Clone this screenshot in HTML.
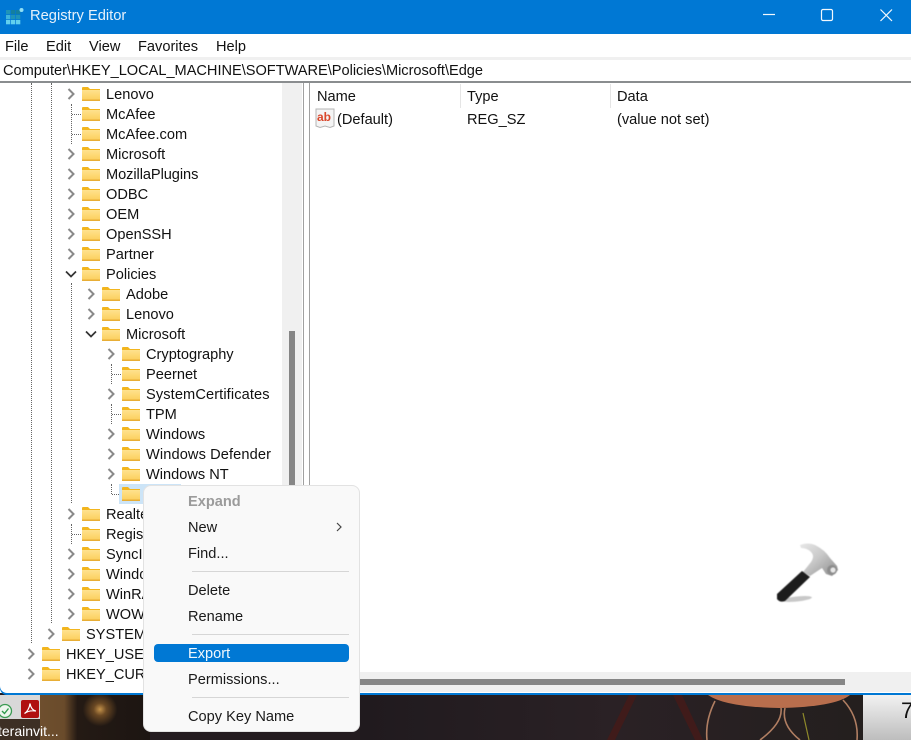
<!DOCTYPE html>
<html><head><meta charset="utf-8"><title>Registry Editor</title>
<style>
html,body{margin:0;padding:0;background:#fff}
#p{position:relative;width:911px;height:740px;overflow:hidden;font-family:"Liberation Sans",sans-serif;font-size:14.6px;color:#111;background:#fff}
.t{position:absolute;line-height:20px;white-space:nowrap;margin-top:1px}
.b{position:absolute}
.f{position:absolute;width:18px;height:14px}
.c{position:absolute;width:10px;height:14px}
.v{position:absolute;width:0;border-left:1px dotted #666}
.h{position:absolute;height:0;border-top:1px dotted #666;width:9px}
.m{position:absolute;left:44px;line-height:20px;white-space:nowrap;color:#1a1a1a;margin-top:1px}
.s{position:absolute;left:48px;width:157px;height:1px;background:#d6d6d6}
</style></head><body><div id="p">
<svg width="0" height="0" style="position:absolute"><defs>
<linearGradient id="fg" x1="0" y1="0" x2="0" y2="1"><stop offset="0" stop-color="#ffe28e"/><stop offset="1" stop-color="#fcd060"/></linearGradient>
<linearGradient id="ma" x1="0" y1="0" x2="1" y2="1"><stop offset="0" stop-color="#e8e8e8"/><stop offset=".45" stop-color="#c9c9c9"/><stop offset="1" stop-color="#8a8a8a"/></linearGradient>
<symbol id="fo" viewBox="0 0 18 14"><path d="M0 1 Q0 0 1 0H6L8 2H18V14H0Z" fill="#f2b51e"/><path d="M0 3H18V12.500H0Z" fill="url(#fg)"/><path d="M0 12.500H18V14H0Z" fill="#e8ae36"/></symbol>
<symbol id="cr" viewBox="0 0 10 14"><path d="M2.500 2 L7.500 7 L2.500 12" fill="none" stroke="#8a8a8a" stroke-width="2"/></symbol>
<symbol id="dn" viewBox="0 0 14 10"><path d="M2 2.500 L7 7.500 L12 2.500" fill="none" stroke="#333" stroke-width="1.700"/></symbol>
</defs></svg>

<!-- desktop strip -->
<div class="b" style="left:0;top:693px;width:911px;height:47px;background:#241c20"></div>
<div class="b" style="left:0;top:695px;width:40px;height:45px;background:#3d2f24"></div>
<div class="b" style="left:40px;top:695px;width:110px;height:45px;background:linear-gradient(90deg,#6e4f2e 0,#6a4b2b 22%,#241a14 34%,#1c1512 100%)"></div>
<div class="b" style="left:82px;top:695px;width:36px;height:32px;background:radial-gradient(ellipse at 50% 45%,#c4924a 0,#6a4823 25%,rgba(30,22,18,0) 68%)"></div>
<div class="b" style="left:0;top:695px;width:40px;height:24px;background:#d8d8d8"></div>
<svg class="b" style="left:0;top:703px" width="14" height="16" viewBox="0 0 14 16"><circle cx="5" cy="8" r="6.500" fill="#eef5ee" stroke="#3a9a52" stroke-width="1.300"/><path d="M2 8 L4.500 10.500 L8.500 5.500" fill="none" stroke="#2f9a4c" stroke-width="1.400"/></svg>
<svg class="b" style="left:21px;top:700px" width="18" height="18" viewBox="0 0 18 18"><rect width="18" height="18" rx="2" fill="#b01010"/><path d="M3.500 13.500C6 12 8.500 8 9 3.500 9.500 7 11.500 10.500 15 11 11 10.500 6.500 11 3.500 13.500Z" fill="none" stroke="#fff" stroke-width="1.200"/></svg>
<div class="t" style="left:-2px;top:720px;color:#fff;font-size:14px">terainvit...</div>
<div class="b" style="left:360px;top:695px;width:503px;height:45px;background:linear-gradient(90deg,#201a1e,#2a2125 50%,#241f1e)"></div>
<svg class="b" style="left:595px;top:695px" width="268" height="45" viewBox="0 0 268 45">
<path d="M12 45L34 0H42L20 45ZM78 0H87L108 45H100Z" fill="#401b1a"/>
<path d="M113 0H255Q240 12 184 13 130 12 113 0Z" fill="#b86e4d"/>
<path d="M120 6Q110 26 112 45M186 13Q188 28 165 45M190 13Q186 30 205 45M248 5Q264 22 262 45" fill="none" stroke="#b07e62" stroke-width="1.600"/>
<path d="M208 18L214 45" stroke="#8f8a2a" stroke-width="1.200" fill="none"/>
</svg>
<div class="b" style="left:863px;top:695px;width:48px;height:45px;background:linear-gradient(180deg,#f2f2f2,#bdbdbd)"></div>
<div class="t" style="left:901px;top:698px;font-size:22px;line-height:24px;color:#111">7</div>

<!-- window -->
<div class="b" style="left:0;top:0;width:911px;height:695px;background:#0078d4;border-radius:0 0 0 7px"></div>
<div class="b" style="left:0;top:0;width:911px;height:693px;background:#fff;border-radius:0 0 0 7px"></div>
<div class="b" style="left:0;top:0;width:911px;height:34px;background:#0078d4"></div>
<svg class="b" style="left:6px;top:8px" width="18" height="17" viewBox="0 0 18 17"><rect x="0" y="2" width="4.300" height="4.300" fill="#1f93b8"/><rect x="5" y="2" width="4.300" height="4.300" fill="#147f9f"/><rect x="10" y="2" width="4.300" height="4.300" fill="#147f9f"/><rect x="0" y="7" width="4.300" height="4.300" fill="#3fb4dc"/><rect x="5" y="7" width="4.300" height="4.300" fill="#1f93b8"/><rect x="10" y="7" width="4.300" height="4.300" fill="#1f93b8"/><rect x="0" y="12" width="4.300" height="4.300" fill="#62d0ee"/><rect x="5" y="12" width="4.300" height="4.300" fill="#62d0ee"/><rect x="10" y="12" width="4.300" height="4.300" fill="#62d0ee"/><circle cx="15.500" cy="2" r="2" fill="#8fdff5"/></svg>
<div class="t" style="left:30px;top:5px;color:#e6f1fb;font-size:14.700px">Registry Editor</div>
<svg class="b" style="left:755px;top:0" width="156" height="34" viewBox="0 0 156 34" fill="none" stroke="#f2f8fd" stroke-width="1.200"><path d="M8 14.500H20"/><rect x="66.500" y="9.500" width="11" height="11" rx="1.500"/><path d="M125.500 9.500L137 21M137 9.500L125.500 21"/></svg>

<div class="t" style="left:5px;top:36px">File</div>
<div class="t" style="left:46px;top:36px">Edit</div>
<div class="t" style="left:89px;top:36px">View</div>
<div class="t" style="left:138px;top:36px">Favorites</div>
<div class="t" style="left:216px;top:36px">Help</div>
<div class="b" style="left:0;top:57px;width:911px;height:3px;background:#f0f0f0"></div>
<div class="t" style="left:3px;top:60px;letter-spacing:-.02px">Computer\HKEY_LOCAL_MACHINE\SOFTWARE\Policies\Microsoft\Edge</div>
<div class="b" style="left:0;top:81px;width:911px;height:2px;background:#8a8d8f"></div>

<!-- scroll + splitter -->
<div class="b" style="left:282px;top:83px;width:20px;height:420px;background:#f0f0f0"></div>
<div class="b" style="left:289px;top:331px;width:6px;height:170px;background:#868686"></div>
<div class="b" style="left:303px;top:83px;width:1px;height:420px;background:#a0a0a0"></div>
<div class="b" style="left:309px;top:83px;width:1px;height:589px;background:#a0a0a0"></div>
<div class="b" style="left:310px;top:672px;width:601px;height:20px;background:#f0f0f0"></div>
<div class="b" style="left:340px;top:679px;width:505px;height:6px;background:#868686"></div>

<!-- list -->
<div class="t" style="left:317px;top:86px">Name</div>
<div class="t" style="left:467px;top:86px">Type</div>
<div class="t" style="left:617px;top:86px">Data</div>
<div class="b" style="left:460px;top:84px;width:1px;height:24px;background:#e5e5e5"></div>
<div class="b" style="left:610px;top:84px;width:1px;height:24px;background:#e5e5e5"></div>
<svg class="b" style="left:315px;top:108px" width="20" height="21" viewBox="0 0 20 21"><path d="M1 1H19V18L15 19.500 10 18 5 19.500 1 18Z" fill="#f4f4f4" stroke="#b5b5b5"/><text x="2" y="13" font-family="Liberation Sans,sans-serif" font-size="12" font-weight="bold" fill="#d9472b">ab</text></svg>
<div class="t" style="left:337px;top:109px">(Default)</div>
<div class="t" style="left:467px;top:109px">REG_SZ</div>
<div class="t" style="left:617px;top:109px">(value not set)</div>

<!-- tree lines -->
<div class="v" style="left:31px;top:83px;height:560px"></div>
<div class="v" style="left:51px;top:83px;height:540px"></div>
<div class="v" style="left:71px;top:104px;height:40px"></div><div class="h" style="left:72px;top:114px"></div><div class="h" style="left:72px;top:134px"></div>
<div class="v" style="left:71px;top:283px;height:220px"></div>
<div class="v" style="left:71px;top:524px;height:20px"></div><div class="h" style="left:72px;top:534px"></div>
<div class="v" style="left:111px;top:364px;height:20px"></div><div class="h" style="left:112px;top:374px"></div>
<div class="v" style="left:111px;top:404px;height:20px"></div><div class="h" style="left:112px;top:414px"></div>
<div class="v" style="left:111px;top:484px;height:10px"></div><div class="h" style="left:112px;top:494px"></div>
<div class="b" style="left:119px;top:484px;width:62px;height:20px;background:#cce4f7"></div>

<!-- level A -->
<svg class="c" style="left:66px;top:87px"><use href="#cr"/></svg><svg class="f" style="left:82px;top:87px"><use href="#fo"/></svg><div class="t" style="left:106px;top:84px">Lenovo</div>
<svg class="f" style="left:82px;top:107px"><use href="#fo"/></svg><div class="t" style="left:106px;top:104px">McAfee</div>
<svg class="f" style="left:82px;top:127px"><use href="#fo"/></svg><div class="t" style="left:106px;top:124px">McAfee.com</div>
<svg class="c" style="left:66px;top:147px"><use href="#cr"/></svg><svg class="f" style="left:82px;top:147px"><use href="#fo"/></svg><div class="t" style="left:106px;top:144px">Microsoft</div>
<svg class="c" style="left:66px;top:167px"><use href="#cr"/></svg><svg class="f" style="left:82px;top:167px"><use href="#fo"/></svg><div class="t" style="left:106px;top:164px;letter-spacing:-.07px">MozillaPlugins</div>
<svg class="c" style="left:66px;top:187px"><use href="#cr"/></svg><svg class="f" style="left:82px;top:187px"><use href="#fo"/></svg><div class="t" style="left:106px;top:184px">ODBC</div>
<svg class="c" style="left:66px;top:207px"><use href="#cr"/></svg><svg class="f" style="left:82px;top:207px"><use href="#fo"/></svg><div class="t" style="left:106px;top:204px">OEM</div>
<svg class="c" style="left:66px;top:227px"><use href="#cr"/></svg><svg class="f" style="left:82px;top:227px"><use href="#fo"/></svg><div class="t" style="left:106px;top:224px">OpenSSH</div>
<svg class="c" style="left:66px;top:247px"><use href="#cr"/></svg><svg class="f" style="left:82px;top:247px"><use href="#fo"/></svg><div class="t" style="left:106px;top:244px">Partner</div>
<svg class="b" style="left:64px;top:269px" width="14" height="10"><use href="#dn"/></svg><svg class="f" style="left:82px;top:267px"><use href="#fo"/></svg><div class="t" style="left:106px;top:264px">Policies</div>
<!-- level B -->
<svg class="c" style="left:86px;top:287px"><use href="#cr"/></svg><svg class="f" style="left:102px;top:287px"><use href="#fo"/></svg><div class="t" style="left:126px;top:284px">Adobe</div>
<svg class="c" style="left:86px;top:307px"><use href="#cr"/></svg><svg class="f" style="left:102px;top:307px"><use href="#fo"/></svg><div class="t" style="left:126px;top:304px">Lenovo</div>
<svg class="b" style="left:84px;top:329px" width="14" height="10"><use href="#dn"/></svg><svg class="f" style="left:102px;top:327px"><use href="#fo"/></svg><div class="t" style="left:126px;top:324px">Microsoft</div>
<!-- level C -->
<svg class="c" style="left:106px;top:347px"><use href="#cr"/></svg><svg class="f" style="left:122px;top:347px"><use href="#fo"/></svg><div class="t" style="left:146px;top:344px">Cryptography</div>
<svg class="f" style="left:122px;top:367px"><use href="#fo"/></svg><div class="t" style="left:146px;top:364px">Peernet</div>
<svg class="c" style="left:106px;top:387px"><use href="#cr"/></svg><svg class="f" style="left:122px;top:387px"><use href="#fo"/></svg><div class="t" style="left:146px;top:384px;letter-spacing:.11px">SystemCertificates</div>
<svg class="f" style="left:122px;top:407px"><use href="#fo"/></svg><div class="t" style="left:146px;top:404px">TPM</div>
<svg class="c" style="left:106px;top:427px"><use href="#cr"/></svg><svg class="f" style="left:122px;top:427px"><use href="#fo"/></svg><div class="t" style="left:146px;top:424px">Windows</div>
<svg class="c" style="left:106px;top:447px"><use href="#cr"/></svg><svg class="f" style="left:122px;top:447px"><use href="#fo"/></svg><div class="t" style="left:146px;top:444px;letter-spacing:.11px">Windows Defender</div>
<svg class="c" style="left:106px;top:467px"><use href="#cr"/></svg><svg class="f" style="left:122px;top:467px"><use href="#fo"/></svg><div class="t" style="left:146px;top:464px">Windows NT</div>
<svg class="f" style="left:122px;top:487px"><use href="#fo"/></svg>
<!-- level A lower -->
<svg class="c" style="left:66px;top:507px"><use href="#cr"/></svg><svg class="f" style="left:82px;top:507px"><use href="#fo"/></svg><div class="t" style="left:106px;top:504px">Realtek</div>
<svg class="f" style="left:82px;top:527px"><use href="#fo"/></svg><div class="t" style="left:106px;top:524px">RegisteredApplications</div>
<svg class="c" style="left:66px;top:547px"><use href="#cr"/></svg><svg class="f" style="left:82px;top:547px"><use href="#fo"/></svg><div class="t" style="left:106px;top:544px">SyncIntegration</div>
<svg class="c" style="left:66px;top:567px"><use href="#cr"/></svg><svg class="f" style="left:82px;top:567px"><use href="#fo"/></svg><div class="t" style="left:106px;top:564px">Windows</div>
<svg class="c" style="left:66px;top:587px"><use href="#cr"/></svg><svg class="f" style="left:82px;top:587px"><use href="#fo"/></svg><div class="t" style="left:106px;top:584px">WinRAR</div>
<svg class="c" style="left:66px;top:607px"><use href="#cr"/></svg><svg class="f" style="left:82px;top:607px"><use href="#fo"/></svg><div class="t" style="left:106px;top:604px">WOW6432Node</div>
<svg class="c" style="left:46px;top:627px"><use href="#cr"/></svg><svg class="f" style="left:62px;top:627px"><use href="#fo"/></svg><div class="t" style="left:86px;top:624px">SYSTEM</div>
<svg class="c" style="left:26px;top:647px"><use href="#cr"/></svg><svg class="f" style="left:42px;top:647px"><use href="#fo"/></svg><div class="t" style="left:66px;top:644px">HKEY_USERS</div>
<svg class="c" style="left:26px;top:667px"><use href="#cr"/></svg><svg class="f" style="left:42px;top:667px"><use href="#fo"/></svg><div class="t" style="left:66px;top:664px">HKEY_CURRENT_CONFIG</div>

<!-- hammer -->
<svg class="b" style="left:772px;top:540px;filter:blur(.45px)" width="70" height="68" viewBox="772 540 70 68">
<ellipse cx="797" cy="599" rx="15" ry="2.500" fill="#b5b5b5" opacity=".75" transform="rotate(-6 797 599)"/>
<path d="M800 545Q808 542 815 545 825 550 830 558L837 566 838 570 832 576 826 574 822 568 810 576 803 572 811 562Q815 556 811 552 807 548 801 548Z" fill="url(#ma)"/>
<circle cx="832" cy="570" r="5" fill="#8c8c8c"/><circle cx="833" cy="570" r="2.600" fill="#e8e8e8"/>
<path d="M777 594L802 571 810 577 785 601Q780 603 777 599Z" fill="#1c1c1c"/>
</svg>

<!-- context menu -->
<div class="b" style="left:143px;top:485px;width:217px;height:247px;background:#f9f9f9;border:1px solid #e2e2e2;border-radius:8px;box-sizing:border-box">
<div class="m" style="top:5px;font-weight:bold;color:#9b9b9b">Expand</div>
<div class="m" style="top:31px">New</div>
<svg class="b" style="left:190px;top:35px" width="10" height="12" viewBox="0 0 10 12"><path d="M3 2L7 6 3 10" fill="none" stroke="#444" stroke-width="1.200"/></svg>
<div class="m" style="top:57px">Find...</div>
<div class="s" style="top:85px"></div>
<div class="m" style="top:94px">Delete</div>
<div class="m" style="top:120px">Rename</div>
<div class="s" style="top:148px"></div>
<div class="b" style="left:10px;top:158px;width:195px;height:18px;background:#0078d4;border-radius:4px"></div>
<div class="m" style="top:157px;color:#f2f8fd">Export</div>
<div class="m" style="top:183px">Permissions...</div>
<div class="s" style="top:211px"></div>
<div class="m" style="top:220px">Copy Key Name</div>
</div>
</div></body></html>
